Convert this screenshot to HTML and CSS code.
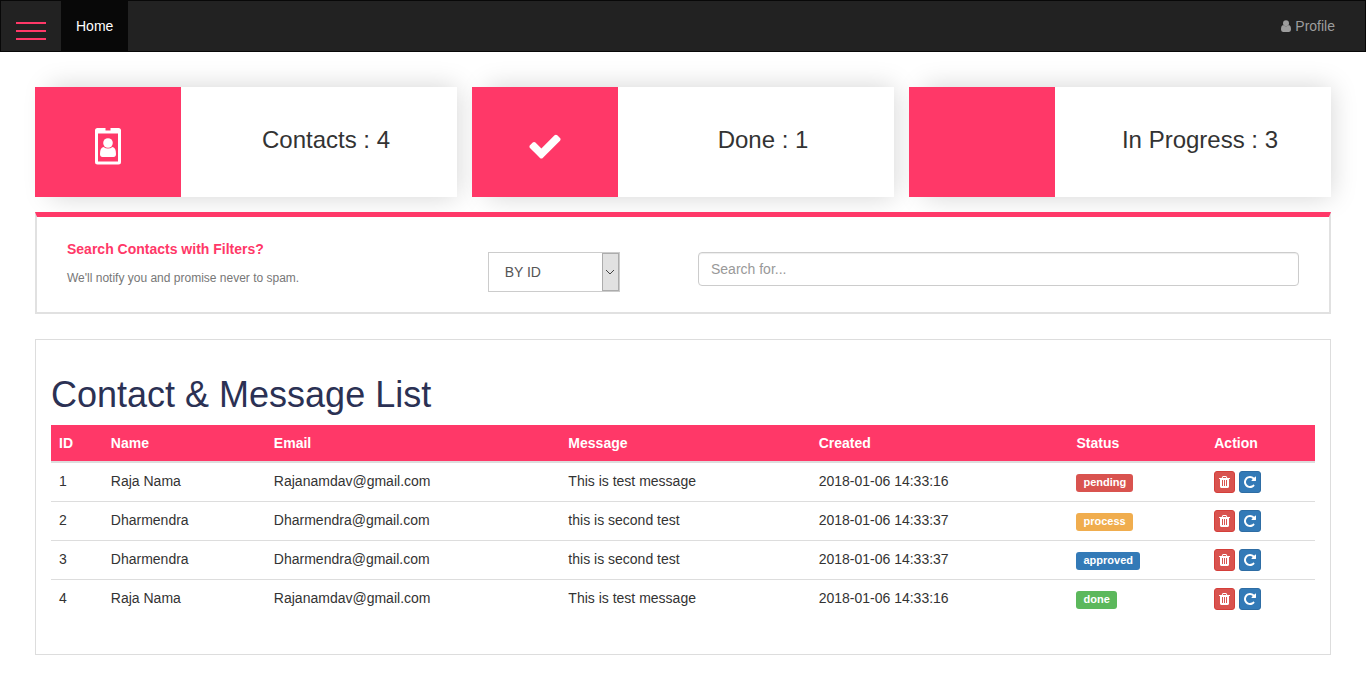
FILE: index.html
```html
<!DOCTYPE html>
<html lang="en">
<head>
<meta charset="utf-8">
<meta name="viewport" content="width=device-width, initial-scale=1">
<title>Contacts</title>
<link rel="stylesheet" href="styles.css">
</head>
<body>
<svg class="sprite" aria-hidden="true">
  <symbol id="trash" viewBox="192 0 1408 1792"><path d="M704 1376v-704q0-14-9-23t-23-9h-64q-14 0-23 9t-9 23v704q0 14 9 23t23 9h64q14 0 23-9t9-23zm256 0v-704q0-14-9-23t-23-9h-64q-14 0-23 9t-9 23v704q0 14 9 23t23 9h64q14 0 23-9t9-23zm256 0v-704q0-14-9-23t-23-9h-64q-14 0-23 9t-9 23v704q0 14 9 23t23 9h64q14 0 23-9t9-23zm-544-992h448l-48-117q-7-9-17-11h-317q-10 2-17 11zm928 32v64q0 14-9 23t-23 9h-96v948q0 83-47 143.500t-113 60.500h-832q-66 0-113-58.500t-47-141.500v-952h-96q-14 0-23-9t-9-23v-64q0-14 9-23t23-9h309l70-167q15-37 54-63t79-26h320q40 0 79 26t54 63l70 167h309q14 0 23 9t9 23z"/></symbol>
  <symbol id="repeat" viewBox="128 0 1536 1792"><path d="M1664 256v448q0 26-19 45t-45 19h-448q-42 0-59-40-17-39 14-69l138-138q-148-137-349-137-104 0-198.500 40.500t-163.500 109.500-109.500 163.500-40.500 198.500 40.500 198.500 109.500 163.500 163.500 109.500 198.500 40.500q119 0 225-52t179-147q7-10 23-12 15 0 25 9l137 138q9 8 9.500 20.500t-7.500 22.500q-109 132-264 204.500t-327 72.500q-156 0-298-61t-245-164-164-245-61-298 61-298 164-245 245-164 298-61q147 0 284.500 55.500t244.500 156.500l130-129q29-31 70-14 39 17 39 59z"/></symbol>
</svg>

<nav class="navbar">
  <button class="menu-toggle" type="button" aria-label="Toggle menu">
    <span class="menu-bar"></span><span class="menu-bar"></span><span class="menu-bar"></span>
  </button>
  <a class="nav-link nav-link-active" href="#">Home</a>
  <a class="nav-link nav-profile" href="#">
    <svg class="user-icon" viewBox="0 0 10 12" aria-hidden="true"><circle cx="5" cy="3.200" r="3"/><path d="M2.200 5Q5 7.600 7.800 5Q10 5.300 10 9.600Q10 12 8 12H2Q0 12 0 9.600Q0 5.300 2.200 5Z"/></svg>
    Profile
  </a>
</nav>

<main class="page">
  <section class="stats">
    <article class="stat">
      <div class="stat-icon">
        <svg class="badge-icon" viewBox="0 0 26 37" aria-hidden="true">
          <path fill-rule="evenodd" d="M2.500 0H10.500V2.500H15.500V0H23.500Q26 0 26 2.500V34Q26 36.500 23.500 36.500H2.500Q0 36.500 0 34V2.500Q0 0 2.500 0ZM3 5.500V33.500H23V5.500Z"/>
          <circle cx="13" cy="15" r="4.800"/>
          <path d="M8.500 19Q13 22 17.500 19Q21 19.500 21 26Q21 29 18.500 29H7.500Q5 29 5 26Q5 19.500 8.500 19Z"/>
        </svg>
      </div>
      <h3 class="stat-text">Contacts : 4</h3>
    </article>
    <article class="stat">
      <div class="stat-icon">
        <svg class="check-icon" viewBox="0 0 1792 1792" aria-hidden="true"><path d="M1671 566q0 40-28 68l-724 724-136 136q-28 28-68 28t-68-28l-136-136-362-362q-28-28-28-68t28-68l136-136q28-28 68-28t68 28l294 295 656-657q28-28 68-28t68 28l136 136q28 28 28 68z"/></svg>
      </div>
      <h3 class="stat-text">Done : 1</h3>
    </article>
    <article class="stat">
      <div class="stat-icon"></div>
      <h3 class="stat-text">In Progress : 3</h3>
    </article>
  </section>

  <form class="filters">
    <div class="filter-cell">
      <label class="filter-title" for="search">Search Contacts with Filters?</label>
      <small class="filter-hint">We'll notify you and promise never to spam.</small>
    </div>
    <div class="filter-cell">
      <div class="select-box">
        <select class="filter-select" aria-label="Filter by"><option>BY ID</option></select>
        <span class="select-arrow"><svg class="chevron" viewBox="0 0 10 6" aria-hidden="true"><path d="M1 1L5 5L9 1"/></svg></span>
      </div>
    </div>
    <div class="filter-cell">
      <input class="search-input" id="search" type="text" placeholder="Search for...">
    </div>
  </form>

  <section class="list">
    <h1 class="list-title">Contact &amp; Message List</h1>
    <table class="contacts">
      <thead>
        <tr><th class="col-id">ID</th><th class="col-name">Name</th><th class="col-email">Email</th><th class="col-message">Message</th><th class="col-created">Created</th><th class="col-status">Status</th><th class="col-action">Action</th></tr>
      </thead>
      <tbody>
        <tr>
          <td>1</td><td>Raja Nama</td><td>Rajanamdav@gmail.com</td><td>This is test message</td><td>2018-01-06 14:33:16</td>
          <td><span class="label label-danger">pending</span></td>
          <td><div class="actions"><button class="btn btn-danger" type="button" aria-label="Delete"><svg class="icon"><use href="#trash"/></svg></button><button class="btn btn-primary" type="button" aria-label="Update"><svg class="icon icon-wide"><use href="#repeat"/></svg></button></div></td>
        </tr>
        <tr>
          <td>2</td><td>Dharmendra</td><td>Dharmendra@gmail.com</td><td>this is second test</td><td>2018-01-06 14:33:37</td>
          <td><span class="label label-warning">process</span></td>
          <td><div class="actions"><button class="btn btn-danger" type="button" aria-label="Delete"><svg class="icon"><use href="#trash"/></svg></button><button class="btn btn-primary" type="button" aria-label="Update"><svg class="icon icon-wide"><use href="#repeat"/></svg></button></div></td>
        </tr>
        <tr>
          <td>3</td><td>Dharmendra</td><td>Dharmendra@gmail.com</td><td>this is second test</td><td>2018-01-06 14:33:37</td>
          <td><span class="label label-primary">approved</span></td>
          <td><div class="actions"><button class="btn btn-danger" type="button" aria-label="Delete"><svg class="icon"><use href="#trash"/></svg></button><button class="btn btn-primary" type="button" aria-label="Update"><svg class="icon icon-wide"><use href="#repeat"/></svg></button></div></td>
        </tr>
        <tr>
          <td>4</td><td>Raja Nama</td><td>Rajanamdav@gmail.com</td><td>This is test message</td><td>2018-01-06 14:33:16</td>
          <td><span class="label label-success">done</span></td>
          <td><div class="actions"><button class="btn btn-danger" type="button" aria-label="Delete"><svg class="icon"><use href="#trash"/></svg></button><button class="btn btn-primary" type="button" aria-label="Update"><svg class="icon icon-wide"><use href="#repeat"/></svg></button></div></td>
        </tr>
      </tbody>
    </table>
  </section>
</main>
</body>
</html>
```
FILE: styles.css
```css
* { box-sizing: border-box; }

body {
  margin: 0;
  background: #fff;
  color: #333;
  font-family: "Liberation Sans", Arial, sans-serif;
  font-size: 14px;
  line-height: 20px;
}

svg { display: block; fill: currentColor; }

.sprite { display: none; }

.navbar {
  display: flex;
  align-items: stretch;
  height: 52px;
  padding-right: 15px;
  background: #222;
  border: 1px solid #080808;
}

.menu-toggle {
  display: flex;
  flex-direction: column;
  gap: 6px;
  width: 60px;
  padding: 21px 15px 0;
  background: none;
  border: 0;
}

.menu-bar { height: 2px; background: #ff3868; }

.nav-link {
  display: flex;
  align-items: center;
  gap: 4px;
  padding: 0 15px;
  color: #9d9d9d;
  text-decoration: none;
}

.nav-link-active { background: #080808; color: #fff; }

.nav-profile { margin-left: auto; }

.user-icon { width: 10px; height: 12px; }

.page { padding: 35px 35px 20px; }

.stats {
  display: grid;
  grid-template-columns: repeat(3, 1fr);
  gap: 15px;
}

.stat {
  display: flex;
  height: 110px;
  margin-left: 15px;
  background: #fff;
  box-shadow: 0 0 25px #d4d4d4;
}

.stat-icon {
  display: flex;
  flex: 0 0 146px;
  align-items: center;
  justify-content: center;
  margin-left: -15px;
  padding-top: 8px;
  background: #ff3868;
  color: #fff;
}

.badge-icon { width: 26px; height: 37px; }

.check-icon { width: 36px; height: 36px; }

.stat-text {
  flex: 1;
  margin: 0;
  padding: 40px 0 0 14px;
  font-size: 24px;
  font-weight: 400;
  line-height: 26px;
  text-align: center;
}

.filters {
  position: relative;
  display: grid;
  grid-template-columns: 4fr 2fr 6fr;
  margin: 15px 0 25px;
  padding: 22px 15px 20px;
  background: #fff;
  border: 2px solid #e1e1e1;
  border-top: 5px solid #ff3868;
}

.filter-cell { padding: 0 15px; }

.filter-cell + .filter-cell { padding-top: 13px; }

.filter-title {
  display: block;
  margin-bottom: 9px;
  color: #ff3868;
  font-weight: 700;
}

.filter-hint { display: block; color: #777; font-size: 12px; }

.select-box { position: relative; width: 132px; }

.filter-select {
  display: block;
  width: 100%;
  height: 40px;
  padding: 0 32px 0 16px;
  background: #fff;
  border: 1px solid #ccc;
  border-radius: 0;
  color: #555;
  font: inherit;
  appearance: none;
}

.select-arrow {
  position: absolute;
  top: 1px;
  right: 1px;
  bottom: 1px;
  display: grid;
  place-items: center;
  width: 17px;
  background: #e1e1e1;
  border: 1px solid #acacac;
  pointer-events: none;
}

.chevron {
  width: 10px;
  height: 6px;
  fill: none;
  stroke: #444;
}

.search-input {
  display: block;
  width: 100%;
  height: 34px;
  padding: 6px 12px;
  border: 1px solid #ccc;
  border-radius: 4px;
  box-shadow: inset 0 1px 1px rgba(0, 0, 0, 0.075);
  color: #555;
  font: inherit;
}

.search-input::placeholder { color: #999; opacity: 1; }

.list {
  padding: 35px 15px 36px;
  border: 1px solid #ddd;
}

.list-title {
  margin: 0 0 10px;
  color: #2b3154;
  font-size: 36px;
  font-weight: 400;
  line-height: 40px;
}

.contacts {
  width: 100%;
  border-collapse: collapse;
  table-layout: fixed;
}

.contacts th,
.contacts td {
  padding: 8px;
  text-align: left;
  vertical-align: top;
}

.contacts th {
  background: #ff3868;
  border-bottom: 2px solid #ddd;
  color: #fff;
}

.contacts td { border-top: 1px solid #ddd; }

.col-id { width: 4.1%; }
.col-name { width: 12.9%; }
.col-email { width: 23.3%; }
.col-message { width: 19.8%; }
.col-created { width: 20.4%; }
.col-status { width: 10.9%; }
.col-action { width: 8.6%; }

.label {
  display: inline-block;
  padding: 0 7px 1px;
  margin-top: 3px;
  border-radius: 3px;
  color: #fff;
  font-size: 11px;
  font-weight: 700;
  line-height: 17px;
  vertical-align: top;
}

.label-danger { background: #d9534f; }
.label-warning { background: #f0ad4e; }
.label-primary { background: #337ab7; }
.label-success { background: #5cb85c; }

.actions { display: flex; gap: 4px; }

.btn {
  height: 22px;
  padding: 0 4px;
  border: 1px solid;
  border-radius: 3px;
  color: #fff;
}

.btn-danger { background: #d9534f; border-color: #d43f3a; }
.btn-primary { background: #337ab7; border-color: #2e6da4; }

.icon { width: 11px; height: 14px; }
.icon-wide { width: 12px; }
```
